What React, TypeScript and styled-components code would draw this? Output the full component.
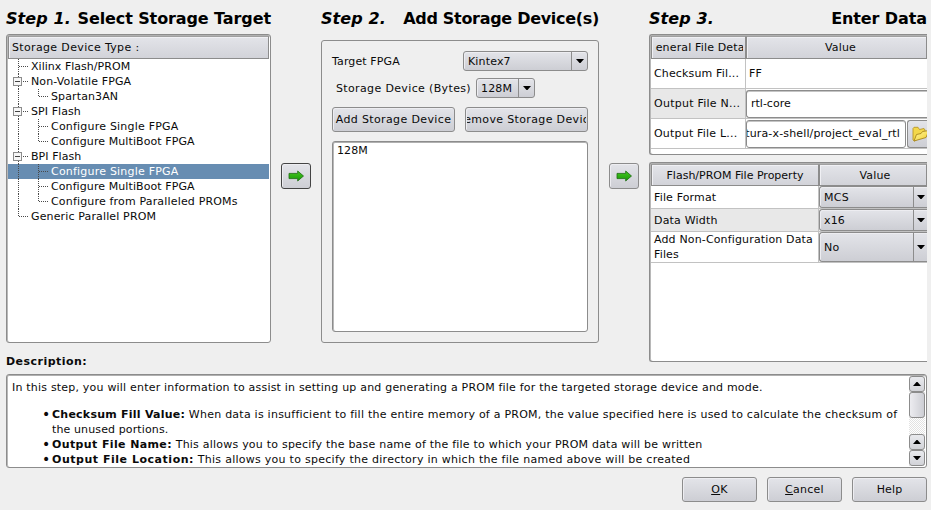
import React from 'react';
import styled, { createGlobalStyle, css } from 'styled-components';

const Global = createGlobalStyle`
  * { box-sizing: border-box; }
  html, body { margin: 0; background: #efefef; }
  body { font: 11px/15px "DejaVu Sans", Verdana, sans-serif; color: #0a0a0a; overflow: hidden; }
`;

const face = css`background: linear-gradient(#e3e4e9, #cdced4);`;

const Page = styled.main`
  width: 931px; height: 510px; padding: 0 4px 0 6px; overflow: hidden;
  display: flex; flex-direction: column; white-space: nowrap;
`;
const Steps = styled.div`
  display: grid; grid-template-columns: 265px 30px 278px 30px 278px; column-gap: 10px; height: 350px;
`;
const Column = styled.section`display: flex; flex-direction: column; min-width: 0;`;
const Heading = styled.h2`
  margin: 0; height: 34px; padding-top: 9px; display: flex; justify-content: space-between;
  font-size: 16px; line-height: 19px; font-weight: bold; color: #000;
`;
const StepNo = styled.em`font-style: italic; letter-spacing: 0.1px;`;
const Title = styled.span<{ $ls?: number }>`letter-spacing: ${p => p.$ls ?? 0}px;`;
const T = styled.span<{ $ls?: number }>`letter-spacing: ${p => p.$ls ?? 0.15}px;`;
const B = styled.b<{ $ls: number }>`letter-spacing: ${p => p.$ls}px;`;

const Sunken = styled.div<{ $h: number; $open?: boolean }>`
  height: ${p => p.$h}px; background: #fff; border: 1px solid #8c8c8c; border-radius: 3px; padding: 1px;
  box-shadow: inset 0 1px 0 #b0b0b0, inset 1px 0 0 #b8b8b8; overflow: hidden; flex: none;
  ${p => p.$open && css`border-right: 0; padding-right: 0; border-radius: 3px 0 0 3px;`}
`;
const HeaderCell = styled.div<{ $center?: boolean; $h?: number; $shift?: number }>`
  height: ${p => p.$h ?? 23}px; padding: 3px 3px 0; overflow: hidden; background: linear-gradient(#e3e4e9, #d2d3d9);
  border: 1px solid #8c8c8c; border-top-color: #a0a0a0;
  box-shadow: inset 1px 1px 0 #f0f0f4;
  ${p => p.$center && css`display: flex; justify-content: center; padding-left: ${3 + (p.$shift ?? 0)}px;`}
`;

const TreeRow = styled.div<{ $sel?: boolean }>`
  display: flex; height: 15px; padding-left: 5px;
  ${p => p.$sel && css`background: #678db2; color: #fff;`}
`;
const Guide = styled.svg`display: block; flex: none; height: 15px;`;

type Item = { text: string; depth: number; open?: boolean; last?: boolean; sel?: boolean; ls: number };
const items: Item[] = [
  { text: 'Xilinx Flash/PROM', depth: 0, ls: 0.03 },
  { text: 'Non-Volatile FPGA', depth: 0, open: true, ls: 0.12 },
  { text: 'Spartan3AN', depth: 1, last: true, ls: 0.12 },
  { text: 'SPI Flash', depth: 0, open: true, ls: 0.08 },
  { text: 'Configure Single FPGA', depth: 1, ls: 0.21 },
  { text: 'Configure MultiBoot FPGA', depth: 1, last: true, ls: 0.09 },
  { text: 'BPI Flash', depth: 0, open: true, ls: 0.06 },
  { text: 'Configure Single FPGA', depth: 1, sel: true, ls: 0.21 },
  { text: 'Configure MultiBoot FPGA', depth: 1, ls: 0.09 },
  { text: 'Configure from Paralleled PROMs', depth: 1, last: true, ls: 0.17 },
  { text: 'Generic Parallel PROM', depth: 0, last: true, ls: 0.14 },
];

function TreeItem({ item }: { item: Item }) {
  const w = item.depth ? 38 : 18;
  const dash = { stroke: '#4a4a4a', strokeDasharray: '1 1' };
  const lastRoot = item.depth === 0 && item.last;
  return (
    <TreeRow $sel={item.sel}>
      <Guide width={w} viewBox={`0 0 ${w} 15`} shapeRendering="crispEdges">
        <path d={lastRoot ? 'M5.5 0V8' : 'M5.5 0V15'} {...dash} />
        {item.depth === 0
          ? <path d="M6 7.5H15" {...dash} />
          : <path d={`M25.5 0V${item.last ? 8 : 15}M26 7.5H35`} {...dash} />}
        {item.open && <><rect x=".5" y="3.5" width="8" height="8" fill="#f6f6f6" stroke="#8c8c8c" /><path d="M2 7.5H7" stroke="#444" /></>}
      </Guide>
      <T $ls={item.ls}>{item.text}</T>
    </TreeRow>
  );
}

const Transfer = styled.button<{ $focus?: boolean }>`
  ${face} width: 30px; height: 26px; margin-top: 163px; padding: 0; border: 1px solid ${p => (p.$focus ? '#444' : '#8c8c8c')};
  border-radius: 3px; display: flex; align-items: center; justify-content: center; box-shadow: inset 1px 1px 0 #ededf1;
`;
const Arrow = () => (
  <svg width="16" height="12" viewBox="0 0 16 12">
    <defs>
      <linearGradient id="arrowFill" x1="0" x2="0" y1="0" y2="1">
        <stop offset="0" stopColor="#45c820" /><stop offset="1" stopColor="#189a08" />
      </linearGradient>
    </defs>
    <path d="M1 3.4H9.7V1L15.5 6 9.7 11V8.6H1Z" fill="url(#arrowFill)" stroke="#1c6a10" strokeWidth=".8" />
  </svg>
);

const Group = styled.div`
  margin-top: 6px; height: 303px; border: 1px solid #8c8c8c; border-radius: 3px; padding: 10px;
  display: flex; flex-direction: column;
`;
const Field = styled.div<{ $between?: boolean; $mt?: number }>`
  display: flex; align-items: center; height: 20px; margin-top: ${p => p.$mt ?? 0}px; flex: none;
  ${p => p.$between ? css`justify-content: space-between;` : css`gap: 5px; padding-left: 4px;`}
`;
const Select = styled.div<{ $w?: number; $h?: number; $flush?: boolean }>`
  ${face} width: ${p => (p.$w ? p.$w + 'px' : '100%')}; height: ${p => p.$h ?? 20}px;
  border: 1px solid #8c8c8c; border-radius: 3px; display: flex; align-items: center;
  padding-left: 4px; box-shadow: inset 1px 1px 0 #ededf1;
  ${p => p.$flush && css`border-right: 0; border-radius: 3px 0 0 3px;`}
`;
const DropCell = styled.span<{ $w: number }>`
  width: ${p => p.$w}px; align-self: stretch; margin-left: auto; border-left: 1px solid #8c8c8c;
  display: flex; align-items: center; justify-content: center;
`;
const Tri = ({ up }: { up?: boolean }) => (
  <svg width="8" height="4" viewBox="0 0 8 4"><path d={up ? 'M0 4L3.5 0H4.5L8 4Z' : 'M0 0H8L4.5 4H3.5Z'} fill="#000" /></svg>
);
const Pair = styled.div`display: flex; gap: 10px; margin: 9px 0;`;
const Button = styled.button<{ $w: number }>`
  ${face} width: ${p => p.$w}px; height: 25px; padding: 0; border: 1px solid #8c8c8c; border-radius: 3px;
  font: inherit; color: #0a0a0a; overflow: hidden; display: flex; align-items: center; justify-content: center; white-space: nowrap;
  box-shadow: inset 1px 1px 0 #ededf1; flex: none;
`;
const Clip = styled.span<{ $w: number }>`
  width: ${p => p.$w}px; overflow: hidden; display: flex; flex: none; justify-content: center;
`;
const ListItem = styled.div`padding: 0 3px;`;

const Grid = styled.div<{ $label: number }>`display: grid; grid-template-columns: ${p => p.$label}px 1fr;`;
const Cell = styled.div<{ $h: number; $alt?: boolean }>`
  height: ${p => p.$h}px; border-bottom: 1px solid #c2c2c2; border-right: 1px solid #c2c2c2; padding-left: 3px;
  display: flex; align-items: center; background: ${p => (p.$alt ? '#e8e8e8' : '#fff')}; overflow: hidden;
`;
const ValueCell = styled.div<{ $h: number; $pad?: number }>`
  height: ${p => p.$h}px; border-bottom: 1px solid #c2c2c2; padding-left: ${p => p.$pad ?? 0}px;
  display: flex; align-items: center; overflow: hidden;
`;
const Input = styled.div<{ $w?: number }>`
  width: ${p => (p.$w ? p.$w + 'px' : '100%')}; height: 28px; border: 1px solid #8c8c8c; border-radius: 3px;
  display: flex; align-items: center; padding-left: 4px; overflow: hidden; flex: none; background: #fff;
  box-shadow: inset 0 1px 0 #c4c4c4;
  ${p => p.$w ? css`padding: 0 5px 0 0;` : css`border-right: 0; border-radius: 3px 0 0 3px;`}
`;
const InputView = styled.span`flex: 1; display: flex; justify-content: flex-end; overflow: hidden;`;
const Browse = styled.div`
  ${face} width: 20px; height: 28px; margin-left: 1px; border: 1px solid #8c8c8c; border-right: 0; border-radius: 3px 0 0 3px;
  display: flex; align-items: center; padding-left: 4px; overflow: hidden; flex: none;
`;
const FolderSvg = styled.svg`flex: none;`;
const Folder = () => (
  <FolderSvg width="18" height="16" viewBox="0 0 18 16">
    <defs>
      <linearGradient id="folderFront" x1="0" x2="1" y1="0" y2="1">
        <stop offset="0" stopColor="#fff6a0" /><stop offset="1" stopColor="#f2cf2a" />
      </linearGradient>
    </defs>
    <path d="M1 2.5L2 1.3H6L7.5 3.5 12 2.5 13 4V8L2.5 15 1 14Z" fill="#f3d74a" stroke="#b8962a" strokeWidth=".9" />
    <path d="M2 15L4.5 8.5 9 7.5 10.5 5.5 17 4.5 14 11.5Z" fill="url(#folderFront)" stroke="#a8861c" strokeWidth=".9" />
  </FolderSvg>
);
const Gap = styled.div`height: 7px; flex: none;`;

const DescLabel = styled.div`height: 24px; padding-top: 4px;`;
const DescBox = styled(Sunken)`display: flex;`;
const DescText = styled.div`flex: 1; padding: 4px 0 0 4px; overflow: hidden;`;
const Bullets = styled.ul`list-style: none; margin: 12px 0 0; padding: 0 0 0 30px;`;
const Bullet = styled.li`
  display: flex; height: 15px;
  &::before { content: "•"; width: 10px; flex: none; font-size: 14px; }
`;
const Continued = styled.li`height: 15px; padding-left: 10px;`;
const ScrollBar = styled.div`
  width: 16px; display: flex; flex-direction: column; justify-content: space-between;
  background: repeating-conic-gradient(#e2e2e2 0 25%, #fff 0 50%) 0 0 / 2px 2px;
`;
const ScrollPart = styled.div<{ $h: number; $thumb?: boolean }>`
  height: ${p => p.$h}px; flex: none; border: 1px solid #8c8c8c; border-radius: 3px;
  display: flex; align-items: center; justify-content: center;
  background: ${p => (p.$thumb ? 'linear-gradient(90deg,#ececf0,#cdced4)' : 'linear-gradient(#e9eaee,#d2d3d8)')};
`;
const Footer = styled.div`display: flex; justify-content: flex-end; gap: 10px; margin-top: 9px;`;

export default function App() {
  return (
    <>
      <Global />
      <Page>
        <Steps>
          <Column>
            <Heading><StepNo>Step 1.</StepNo><Title $ls={-0.1}>Select Storage Target</Title></Heading>
            <Sunken $h={309}>
              <HeaderCell><T $ls={0.35}>Storage Device Type :</T></HeaderCell>
              {items.map((it, i) => <TreeItem key={i} item={it} />)}
            </Sunken>
          </Column>
          <Transfer $focus><Arrow /></Transfer>
          <Column>
            <Heading><StepNo>Step 2.</StepNo><Title $ls={-0.3}>Add Storage Device(s)</Title></Heading>
            <Group>
              <Field $between>
                <T $ls={0.12}>Target FPGA</T>
                <Select $w={125}><T>Kintex7</T><DropCell $w={16}><Tri /></DropCell></Select>
              </Field>
              <Field $mt={7}>
                <T $ls={0.36}>Storage Device (Bytes)</T>
                <Select $w={59}><T>128M</T><DropCell $w={16}><Tri /></DropCell></Select>
              </Field>
              <Pair>
                <Button $w={123}><T $ls={0.37}>Add Storage Device</T></Button>
                <Button $w={123}><Clip $w={119}><T $ls={0.35}>Remove Storage Device</T></Clip></Button>
              </Pair>
              <Sunken $h={191}><ListItem><T $ls={0.1}>128M</T></ListItem></Sunken>
            </Group>
          </Column>
          <Transfer><Arrow /></Transfer>
          <Column>
            <Heading><StepNo>Step 3.</StepNo><Title $ls={-0.1}>Enter Data</Title></Heading>
            <Sunken $h={121} $open>
              <Grid $label={95}>
                <HeaderCell><Clip $w={88}><T $ls={0.15}>General File Detail</T></Clip></HeaderCell>
                <HeaderCell $center $shift={8}><T>Value</T></HeaderCell>
                <Cell $h={30}><T>Checksum Fil...</T></Cell>
                <ValueCell $h={30} $pad={3}><T>FF</T></ValueCell>
                <Cell $h={30} $alt><T $ls={0.25}>Output File N...</T></Cell>
                <ValueCell $h={30}><Input><T $ls={0}>rtl-core</T></Input></ValueCell>
                <Cell $h={30}><T $ls={0.2}>Output File L...</T></Cell>
                <ValueCell $h={30}><Input $w={160}><InputView><T $ls={0.15}>tura-x-shell/project_eval_rtl</T></InputView></Input><Browse><Folder /></Browse></ValueCell>
              </Grid>
            </Sunken>
            <Gap />
            <Sunken $h={200} $open>
              <Grid $label={168}>
                <HeaderCell $h={22} $center><T $ls={0}>Flash/PROM File Property</T></HeaderCell>
                <HeaderCell $h={22} $center $shift={4}><T>Value</T></HeaderCell>
                <Cell $h={23}><T>File Format</T></Cell>
                <ValueCell $h={23}><Select $flush $h={22}><T $ls={0.3}>MCS</T><DropCell $w={14}><Tri /></DropCell></Select></ValueCell>
                <Cell $h={23} $alt><T $ls={0.2}>Data Width</T></Cell>
                <ValueCell $h={23}><Select $flush $h={22}><T>x16</T><DropCell $w={14}><Tri /></DropCell></Select></ValueCell>
                <Cell $h={31}><T>Add Non-Configuration Data<br />Files</T></Cell>
                <ValueCell $h={31}><Select $flush $h={30}><T>No</T><DropCell $w={14}><Tri /></DropCell></Select></ValueCell>
              </Grid>
            </Sunken>
          </Column>
        </Steps>
        <DescLabel><B $ls={0.47}>Description:</B></DescLabel>
        <DescBox $h={94}>
          <DescText>
            <T $ls={0.2}>In this step, you will enter information to assist in setting up and generating a PROM file for the targeted storage device and mode.</T>
            <Bullets>
              <Bullet><T $ls={0.24}><B $ls={0.24}>Checksum Fill Value:</B> When data is insufficient to fill the entire memory of a PROM, the value specified here is used to calculate the checksum of</T></Bullet>
              <Continued><T $ls={0.12}>the unused portions.</T></Continued>
              <Bullet><T $ls={0.22}><B $ls={0.38}>Output File Name:</B> This allows you to specify the base name of the file to which your PROM data will be written</T></Bullet>
              <Bullet><T $ls={0.27}><B $ls={0.53}>Output File Location:</B> This allows you to specify the directory in which the file named above will be created</T></Bullet>
            </Bullets>
          </DescText>
          <ScrollBar>
            <div>
              <ScrollPart $h={16}><Tri up /></ScrollPart>
              <ScrollPart $h={26} $thumb />
            </div>
            <div>
              <ScrollPart $h={16}><Tri up /></ScrollPart>
              <ScrollPart $h={16}><Tri /></ScrollPart>
            </div>
          </ScrollBar>
        </DescBox>
        <Footer>
          <Button $w={75}><T $ls={0.4}><u>O</u>K</T></Button>
          <Button $w={75}><T $ls={0.25}><u>C</u>ancel</T></Button>
          <Button $w={75}><T>Help</T></Button>
        </Footer>
      </Page>
    </>
  );
}
